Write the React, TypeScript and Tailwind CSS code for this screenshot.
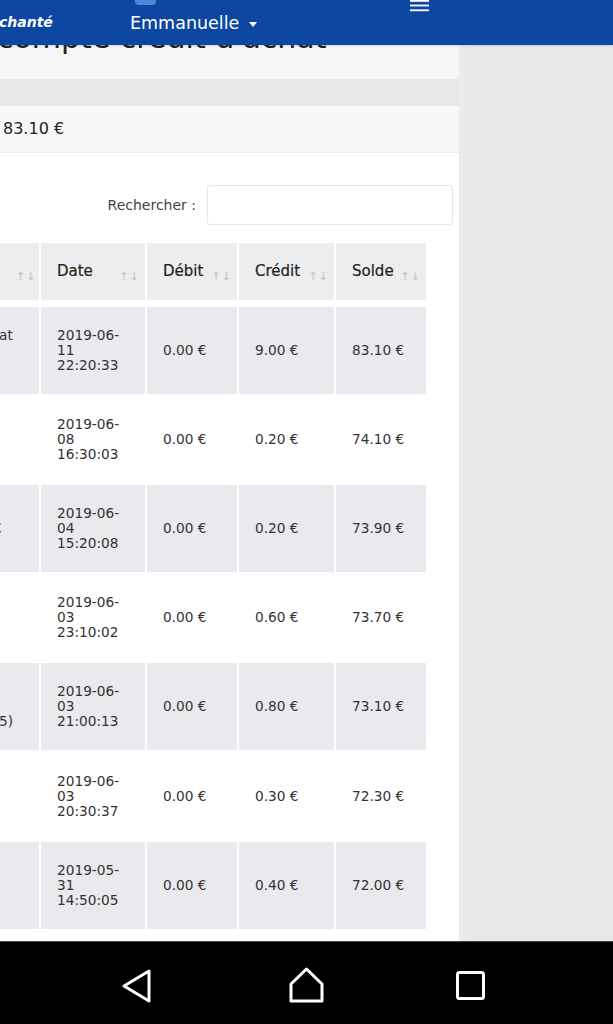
import React from "react";

const rows = [
  { lead: "at", leadLine: 0, date: ["2019-06-", "11", "22:20:33"], debit: "0.00 €", credit: "9.00 €", solde: "83.10 €" },
  { lead: "", leadLine: 0, date: ["2019-06-", "08", "16:30:03"], debit: "0.00 €", credit: "0.20 €", solde: "74.10 €" },
  { lead: "€", leadLine: 1, date: ["2019-06-", "04", "15:20:08"], debit: "0.00 €", credit: "0.20 €", solde: "73.90 €" },
  { lead: "", leadLine: 0, date: ["2019-06-", "03", "23:10:02"], debit: "0.00 €", credit: "0.60 €", solde: "73.70 €" },
  { lead: "5)", leadLine: 2, date: ["2019-06-", "03", "21:00:13"], debit: "0.00 €", credit: "0.80 €", solde: "73.10 €" },
  { lead: "", leadLine: 0, date: ["2019-06-", "03", "20:30:37"], debit: "0.00 €", credit: "0.30 €", solde: "72.30 €" },
  { lead: "", leadLine: 0, date: ["2019-05-", "31", "14:50:05"], debit: "0.00 €", credit: "0.40 €", solde: "72.00 €" },
];

const headers = [
  { label: "", w: "w-[39px]" },
  { label: "Date", w: "w-[104px]" },
  { label: "Débit", w: "w-[90px]" },
  { label: "Crédit", w: "w-[95px]" },
  { label: "Solde", w: "w-[90px]" },
];

function SortArrows() {
  return <span className="text-[11px] leading-none tracking-[1px] text-[#c2c2c2]">↑↓</span>;
}

export default function App() {
  return (
    <div className="relative flex h-[1024px] w-[613px] flex-col overflow-hidden bg-[#e8e8eb] font-['DejaVu_Sans',sans-serif] text-[#333]">
      {/* contenu */}
      <div className="flex min-h-0 flex-1">
        <div className="flex w-[459px] flex-col overflow-hidden">
          {/* titre (en partie sous la barre) */}
          <div className="h-[79px] shrink-0 overflow-hidden bg-[#f6f6f6] pt-[22px]">
            <h1 className="-ml-[3px] whitespace-nowrap text-[30px] leading-[32px] text-[#222]">compte crédit d'achat</h1>
          </div>
          <div className="h-[27px] shrink-0" />

          {/* carte */}
          <div className="flex flex-1 flex-col bg-white">
            <div className="flex h-[47px] items-center border-b border-[#ececec] bg-[#f7f7f7] pl-[3px] text-[16px] text-[#222]">
              83.10 €
            </div>

            <div className="mt-[32px] flex items-center justify-end pr-[6px]">
              <span className="mr-[11px] text-[14px] text-[#444]">Rechercher :</span>
              <div className="h-[40px] w-[246px] rounded-[3px] border border-[#e6e6e6] bg-white" />
            </div>

            {/* tableau */}
            <div className="mt-[18px] flex flex-col gap-[2.2px]">
              <div className="mb-[4.5px] flex h-[57px] gap-[2px]">
                {headers.map((h, i) => (
                  <div key={i} className={`${h.w} flex items-center justify-between bg-[#ededed] pl-[16px] pr-[5px]`}>
                    <span className="text-[15px] text-[#1e1e1e] [-webkit-text-stroke:0.2px_#1e1e1e]">{h.label}</span>
                    <span className="mt-[6px]">
                      <SortArrows />
                    </span>
                  </div>
                ))}
              </div>

              {rows.map((r, i) => {
                const bg = i % 2 === 0 ? "bg-[#e9e9ee]" : "bg-white";
                return (
                  <div key={i} className="flex h-[87px] gap-[2px] text-[13.7px] leading-[15px] text-[#333]">
                    <div className={`${bg} flex w-[39px] flex-col justify-center overflow-hidden`}>
                      {[0, 1, 2].map((l) => (
                        <span
                          key={l}
                          className={`block h-[15px] whitespace-nowrap ${r.lead === "€" ? "-ml-[7px]" : "-ml-[1px]"}`}
                        >
                          {r.lead && r.leadLine === l ? r.lead : ""}
                        </span>
                      ))}
                    </div>
                    <div className={`${bg} flex w-[104px] flex-col justify-center pl-[16px]`}>
                      {r.date.map((d) => (
                        <span key={d} className="block h-[15px] whitespace-nowrap">
                          {d}
                        </span>
                      ))}
                    </div>
                    <div className={`${bg} flex w-[90px] items-center pl-[16px]`}>{r.debit}</div>
                    <div className={`${bg} flex w-[95px] items-center pl-[16px]`}>{r.credit}</div>
                    <div className={`${bg} flex w-[90px] items-center pl-[16px]`}>{r.solde}</div>
                  </div>
                );
              })}
            </div>
          </div>
        </div>
        <div className="w-[14px] bg-gradient-to-r from-[#ececee] to-[#e8e8eb]" />
        <div className="flex-1" />
      </div>

      {/* barre de navigation Android */}
      <div className="flex h-[83px] shrink-0 items-center border-t border-[#4a4a4a] bg-black">
        <svg width="613" height="82" viewBox="0 0 613 82" fill="none" stroke="white" strokeWidth="3" strokeLinejoin="round">
          <path d="M124 44 L149 29 L149 59 Z" />
          <path d="M291 42 L306.5 27 L322 42 L322 59 L291 59 Z" />
          <rect x="457.5" y="30.5" width="26" height="26" rx="2" />
        </svg>
      </div>

      {/* barre du haut, fixe, par-dessus le contenu */}
      <div className="absolute left-0 right-0 top-0 h-[45px] bg-[#0d47a1] shadow-[0_1px_2px_rgba(0,0,0,0.15)]">
        <span className="absolute left-[135px] top-[-15px] h-[20px] w-[21px] rounded-[4px] bg-[#5187d8]" />
        <div className="flex h-full items-center">
          <span className="-ml-[1px] w-[131px] text-[14px] font-bold italic text-white">chanté</span>
          <span className="mt-[1px] text-[17.5px] text-white">Emmanuelle</span>
          <span className="ml-[10px] mt-[3px] h-0 w-0 border-x-[4.5px] border-t-[5px] border-x-transparent border-t-white" />
        </div>
        <svg className="absolute left-[410px] top-0" width="19" height="12" viewBox="0 0 19 12" fill="white">
          <rect x="0" y="0" width="19" height="1.8" />
          <rect x="0" y="4.6" width="19" height="1.8" />
          <rect x="0" y="9.4" width="19" height="1.8" />
        </svg>
      </div>
    </div>
  );
}
